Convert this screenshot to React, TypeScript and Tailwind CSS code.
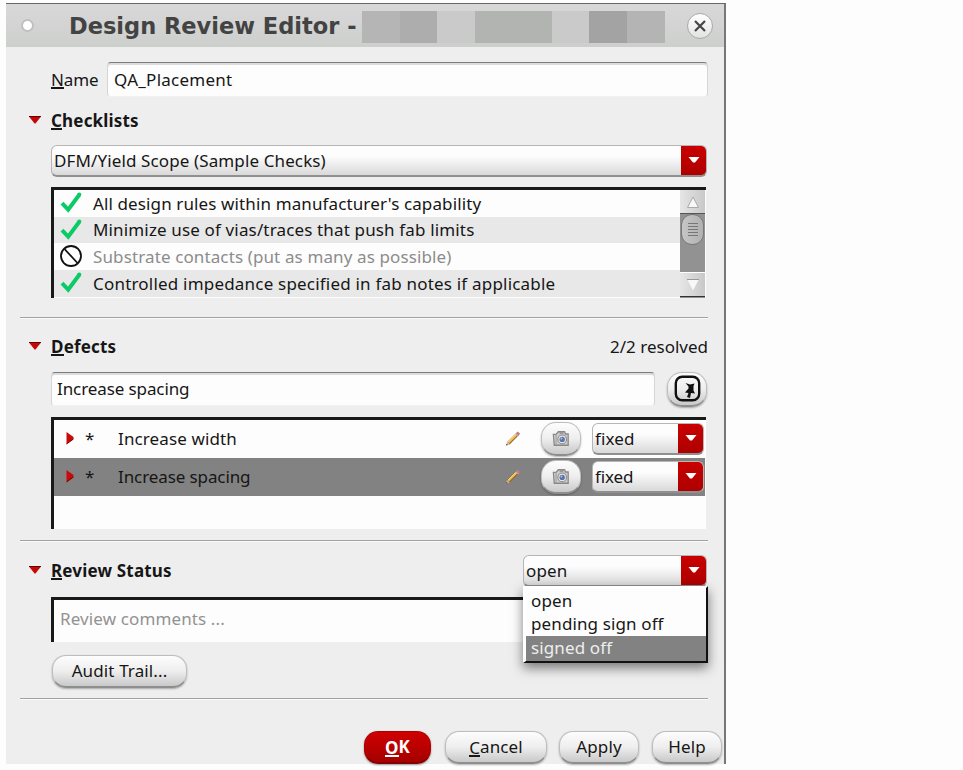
import type { ReactNode } from "react";

const silver =
  "border border-[#bdbdbd] border-b-2 border-b-[#8e8e8e] bg-linear-to-b from-[#fdfdfd] via-[#eeeeee] to-[#c9c9c9] shadow-[0_1px_2px_rgba(0,0,0,0.3)]";

function Heading({ first, rest, children }: { first: string; rest: string; children?: ReactNode }) {
  return (
    <div className="flex h-8 items-center pr-[16px] pl-[23px]">
      <svg width="12" height="8" viewBox="0 0 12 8" className="mr-[10px] -mt-[3px]">
        <path d="M0 .5H12L6.5 7.5h-1Z" fill="#c40808" />
        <path d="M0 .5H12" stroke="#600" strokeWidth="1" />
      </svg>
      <span className="grow font-bold tracking-[0.18px]">
        <Key letter={first} />
        {rest}
      </span>
      {children}
    </div>
  );
}

function Key({ letter }: { letter: string }) {
  return <span className="inline-block h-[19px] border-b-2 border-current leading-[19px]">{letter}</span>;
}

function Combo({ label, className }: { label: string; className: string }) {
  return (
    <div
      className={`flex items-stretch overflow-hidden rounded-[6px] border border-[#b5b5b5] border-b-2 border-b-[#909090] bg-linear-to-b from-[#fdfdfd] from-35% to-[#d9d9d9] ${className}`}
    >
      <span className="flex grow items-center pl-[2px]">{label}</span>
      <span className="flex w-[25px] items-start justify-center bg-linear-to-b from-[#c90000] to-[#ae0000] pt-[11px]">
        <svg width="12" height="7" viewBox="0 0 12 7">
          <path d="M.5 0h11L7 5.5H5Z" fill="#fff" />
        </svg>
      </span>
    </div>
  );
}

function Check() {
  return (
    <svg width="24" height="24" viewBox="0 0 24 24">
      <path d="M3 12.2 9.2 18.6 20.5 3.5" fill="none" stroke="#0bcb66" strokeWidth="4" />
      <circle cx="20.3" cy="3.6" r="2" fill="#0bcb66" />
    </svg>
  );
}

function Banned() {
  return (
    <svg width="24" height="24" viewBox="0 0 24 24">
      <circle cx="12" cy="12" r="10" fill="#fff" stroke="#111" strokeWidth="1.8" />
      <path d="M5.5 5 18.5 19" stroke="#111" strokeWidth="1.8" />
    </svg>
  );
}

function Pencil() {
  return (
    <svg width="17" height="17" viewBox="0 0 17 17">
      <path d="M3.4 13.2 12 4.6" stroke="#8c6330" strokeWidth="3.4" />
      <path d="M3.4 12.8 11.8 4.5" stroke="#f2bd42" strokeWidth="1.8" />
      <path d="M3.2 12 11.2 4" stroke="#ffe391" strokeWidth="0.9" />
      <path d="M11 3.4 13.6 6" stroke="#a9a9b6" strokeWidth="1.5" />
      <path d="m12.3 4.3 1.7-1.7" stroke="#cf7480" strokeWidth="3.4" />
      <path d="m1 15.6 1-3.6 2.700 2.700Z" fill="#d6b898" />
      <path d="m1 15.6.6-1.800 1.200 1.200Z" fill="#444" />
    </svg>
  );
}

function Camera() {
  return (
    <svg width="18" height="17" viewBox="0 0 20 18">
      <path d="M1.5 4.5h3L7 1.500h7l1 2.500h3v12.500H2.500Z" fill="#ccc" stroke="#888" strokeWidth="1.4" />
      <path d="M4.5 4v12.500" stroke="#999" />
      <path d="M8.5 3h4" stroke="#888" strokeWidth="1.5" />
      <circle cx="11.3" cy="10" r="4.8" fill="#e6e6e6" stroke="#8c8c8c" strokeWidth="1.2" />
      <circle cx="11.3" cy="10" r="3" fill="#5874a8" />
      <circle cx="10.5" cy="9" r="1.1" fill="#a9c0e8" />
    </svg>
  );
}

function CheckRow({ text, off, className }: { text: string; off?: boolean; className: string }) {
  return (
    <div className={`flex items-center pl-[5px] ${className}`}>
      <span className="-mt-[1px] mr-[10px]">{off ? <Banned /> : <Check />}</span>
      <span className={off ? "text-[#8c8c8c]" : ""}>{text}</span>
    </div>
  );
}

function DefectRow({ text, className }: { text: string; className: string }) {
  return (
    <div className={`mr-px flex shrink-0 items-center pr-px ${className}`}>
      <svg width="8" height="14" viewBox="0 0 8 14" className="-mt-[3px] ml-[12px]">
        <path d="M.5 1 7.5 6v2L.5 13Z" fill="#c90a0a" />
        <path d="M.5 13 7.5 8" stroke="#700" />
      </svg>
      <span className="ml-[11px] w-[33px]">*</span>
      <span className="grow">{text}</span>
      <span className="-mt-[2px] mr-[19px]">
        <Pencil />
      </span>
      <span className={`mr-[11px] flex h-[34px] w-[40px] items-center justify-center rounded-[15px] ${silver}`}>
        <Camera />
      </span>
      <Combo label="fixed" className="h-[32px] w-[112px]" />
    </div>
  );
}

function Pill({ children, className }: { children: ReactNode; className: string }) {
  return <div className={`flex h-[33px] items-center justify-center rounded-[14px] ${className}`}>{children}</div>;
}

function Rule({ className }: { className: string }) {
  return <div className={`mr-[16px] ml-[14px] h-[2px] shrink-0 border-t border-[#a3a1a5] bg-[#fafafa] ${className}`} />;
}

function ScrollBar() {
  return (
    <div className="mr-px flex w-[25px] shrink-0 flex-col bg-[#929292]">
      <div className="flex h-[24px] items-center justify-center border-b border-[#555] bg-linear-to-r from-[#e6e6e6] to-[#c8c8c8]">
        <svg width="14" height="14" viewBox="0 0 14 14">
          <path d="M1.5 12.5 7 2l5.5 10.5Z" fill="#f8f8f8" stroke="#aaa" />
        </svg>
      </div>
      <div className="mx-[1px] flex h-[31px] flex-col items-center justify-center gap-[2px] rounded-[11px] border border-[#777] bg-linear-to-r from-[#c6c6c6] to-[#b1b1b1]">
        <i className="h-px w-[10px] bg-[#777]" />
        <i className="h-px w-[10px] bg-[#777]" />
        <i className="h-px w-[10px] bg-[#777]" />
        <i className="h-px w-[10px] bg-[#777]" />
        <i className="h-px w-[10px] bg-[#777]" />
      </div>
      <div className="mt-auto mb-px flex h-[25px] items-center justify-center border-t border-b border-t-white border-b-[#333] bg-linear-to-r from-[#e6e6e6] to-[#c8c8c8]">
        <svg width="14" height="14" viewBox="0 0 14 14">
          <path d="M1.5 2 7 12.5 12.5 2Z" fill="#f8f8f8" />
          <path d="M1 1.5h12" stroke="#999" />
        </svg>
      </div>
    </div>
  );
}

const field =
  "flex items-center rounded-[4px] border border-[#d3d6d3] border-t-[#7c7c7c] border-b-[#f2f2f2] bg-[#fdfdfd] shadow-[inset_0_2px_0_#dcdcdc]";
const sunken = "border-t-[3px] border-l-[3px] border-[#181a1a] bg-[#fdfdfd]";

export default function App() {
  return (
    <div className="h-[770px] w-[963px] overflow-hidden bg-[#fdfdfd] pt-[3px] pl-[6px] font-['Noto_Sans',sans-serif] text-[17px] leading-[22px] tracking-[0.12px] whitespace-nowrap text-[#161616]">
      <div className="flex h-[761px] w-[720px] flex-col border-t border-r-2 border-t-[#666] border-r-[#777] bg-[#efeeef]">
        <div className="flex h-[43px] shrink-0 items-center bg-linear-to-b from-[#d8d8d8] to-[#cdcfcd]">
          <span className="-mt-[1px] ml-[15px] size-[13px] rounded-full border-2 border-[#c0c0c0] bg-white" />
          <span className="ml-[35px] w-[293px] font-['DejaVu_Sans',sans-serif] text-[22.5px] font-bold tracking-normal text-[#434343]">
            Design Review Editor -
          </span>
          <div className="mt-[3px] flex h-[32px] w-[303px]">
            <i className="w-[38px] bg-[#b5b5b5]" />
            <i className="w-[37px] bg-[#adadad]" />
            <i className="w-[38px] bg-[#cacaca]" />
            <i className="w-[77px] bg-[#b2b4b2]" />
            <i className="w-[37px] bg-[#cacaca]" />
            <i className="w-[38px] bg-[#a3a3a3]" />
            <i className="w-[38px] bg-[#b4b4b4]" />
          </div>
          <span className="ml-[22px] flex size-[26px] items-center justify-center rounded-full border border-[#aaa] bg-linear-to-b from-white to-[#e2e2e2]">
            <svg width="12" height="12" viewBox="0 0 12 12">
              <path d="M1 1 11 11M11 1 1 11" stroke="#444" strokeWidth="2.2" />
            </svg>
          </span>
        </div>

        <div className="mt-[15px] flex h-[35px] items-center pr-[16px] pl-[45px]">
          <span className="w-[56px] tracking-[-0.1px]">
            <Key letter="N" />
            ame
          </span>
          <div className={`h-[35px] grow pl-[6px] tracking-[0.25px] ${field}`}>QA_Placement</div>
        </div>

        <div className="mt-[8px]">
          <Heading first="C" rest="hecklists" />
        </div>
        <Combo
          label="DFM/Yield Scope (Sample Checks)"
          className="mt-[8px] mr-[17px] ml-[45px] h-[32px] shrink-0"
        />

        <div className={`mt-[10px] mr-[18px] ml-[45px] flex h-[111px] shrink-0 ${sunken}`}>
          <div className="flex grow flex-col">
            <CheckRow className="h-[27px]" text="All design rules within manufacturer's capability" />
            <CheckRow className="h-[26px] bg-[#e8e8e8] tracking-[0.15px]" text="Minimize use of vias/traces that push fab limits" />
            <CheckRow className="h-[27px]" off text="Substrate contacts (put as many as possible)" />
            <CheckRow
              className="h-[27px] bg-[#e8e8e8] tracking-[0.2px]"
              text="Controlled impedance specified in fab notes if applicable"
            />
          </div>
          <ScrollBar />
        </div>

        <Rule className="mt-[19px]" />
        <div className="mt-[12px]">
          <Heading first="D" rest="efects">
            <span className="tracking-normal">2/2 resolved</span>
          </Heading>
        </div>
        <div className="mt-[9px] flex h-[34px] shrink-0 items-center pl-[45px]">
          <div className={`h-[34px] w-[604px] pl-[5px] tracking-[-0.1px] ${field}`}>Increase spacing</div>
          <div className={`ml-[12px] flex h-[35px] w-[40px] items-center justify-center rounded-[15px] ${silver}`}>
            <svg width="27" height="27" viewBox="0 0 27 27">
              <rect x="1.8" y="1.8" width="23.4" height="23.4" rx="6.5" fill="none" stroke="#111" strokeWidth="2.4" />
              <path d="M11.5 8 16 9.5 20.5 8.5 19.500 11v4.500l1.500 3-4-.5-1 5-3-1 1.500-4-3.500-.5 3.500-4V11.500Z" fill="#111" />
            </svg>
          </div>
        </div>
        <div className={`mt-[11px] mr-[18px] ml-[45px] flex h-[112px] shrink-0 flex-col ${sunken}`}>
          <DefectRow text="Increase width" className="h-[38px]" />
          <DefectRow text="Increase spacing" className="h-[38px] bg-[#828282] tracking-[-0.1px]" />
        </div>

        <Rule className="mt-[11px]" />
        <div className="relative mt-[13px]">
          <Heading first="R" rest="eview Status">
            <Combo label="open" className="mr-px h-[32px] w-[184px]" />
          </Heading>
          <div className="absolute top-[31px] right-[16px] z-10 w-[185px] border-t-2 border-r-2 border-b-2 border-l-[3px] border-t-white border-r-[#111] border-b-[#111] border-l-white bg-[#fdfdfd] pt-[2px] shadow-[0_5px_11px_rgba(0,0,0,0.5)]">
            <div className="h-[23px] pl-[5px]">open</div>
            <div className="h-[23px] pl-[5px]">pending sign off</div>
            <div className="h-[25px] bg-[#828282] pt-px pl-[5px] text-[#eee]">signed off</div>
          </div>
        </div>
        <div className={`mt-[10px] mr-[18px] ml-[45px] h-[45px] shrink-0 pt-[8px] pl-[6px] text-[#929292] ${sunken}`}>
          Review comments ...
        </div>
        <Pill className={`mt-[13px] ml-[46px] w-[135px] ${silver}`}>Audit Trail...</Pill>
        <Rule className="mt-[10px]" />
        <div className="mt-[31px] flex pl-[358px]">
          <Pill className="w-[67px] border border-[#a00] border-b-2 border-b-[#850000] bg-linear-to-b from-[#d00000] to-[#a50000] font-bold text-white shadow-[0_1px_2px_rgba(0,0,0,0.4)]">
            <Key letter="O" />K
          </Pill>
          <Pill className={`ml-[14px] w-[102px] ${silver}`}>
            <Key letter="C" />
            ancel
          </Pill>
          <Pill className={`ml-[12px] w-[80px] ${silver}`}>Apply</Pill>
          <Pill className={`ml-[13px] w-[70px] ${silver}`}>Help</Pill>
        </div>
      </div>
    </div>
  );
}
